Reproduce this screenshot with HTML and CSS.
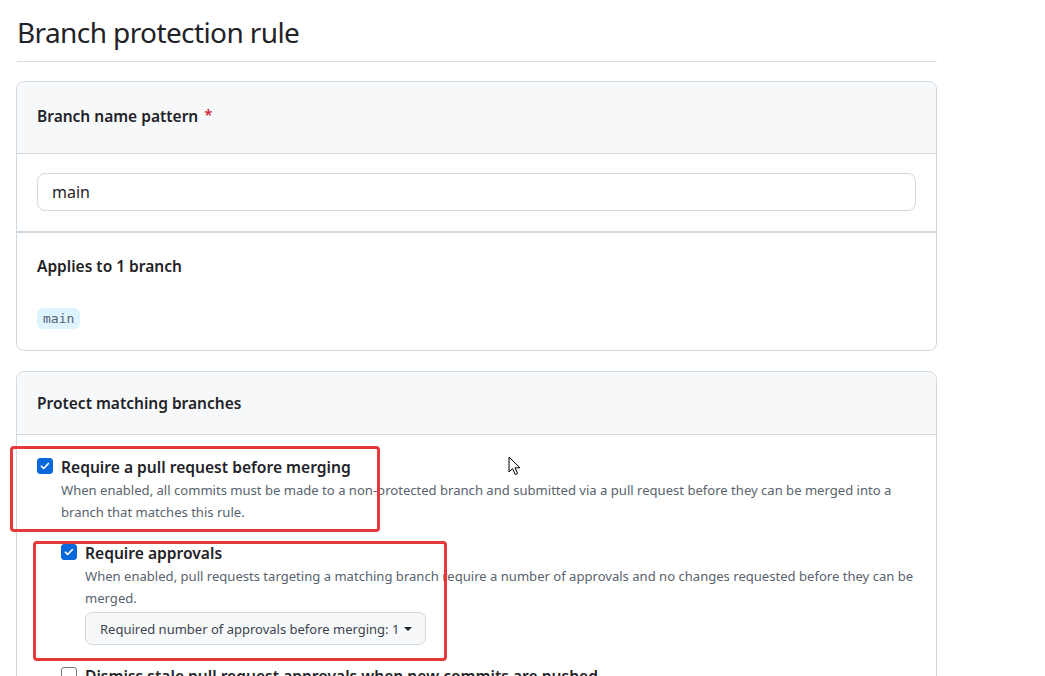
FILE: index.html
```html
<!DOCTYPE html>
<html lang="en">
<head>
<meta charset="utf-8">
<title>Branch protection rule</title>
<link rel="stylesheet" href="styles.css">
</head>
<body>
<div class="page">
  <h1 class="title">Branch protection rule</h1>

  <section class="box">
    <div class="box-header first">
      <span class="label">Branch name pattern</span><span class="req">*</span>
    </div>
    <div class="box-row input-row">
      <div class="text-input">main</div>
    </div>
    <div class="box-row applies">
      <div class="label">Applies to 1 branch</div>
      <div class="chips"><code class="chip">main</code></div>
    </div>
  </section>

  <section class="box box2">
    <div class="box-header">
      <span class="label">Protect matching branches</span>
    </div>
    <div class="box-body">
      <div class="option">
        <span class="cb checked"><svg viewBox="0 0 16 16" width="12" height="12"><path d="M3.2 8.3l3 3 6.4-6.6" fill="none" stroke="#fff" stroke-width="2.2" stroke-linecap="round" stroke-linejoin="round"/></svg></span>
        <div class="opt-text">
          <div class="opt-title">Require a pull request before merging</div>
          <div class="opt-desc">When enabled, all commits must be made to a non-protected branch and submitted via a pull request before they can be merged into a branch that matches this rule.</div>
        </div>
      </div>
      <div class="option nested">
        <span class="cb checked"><svg viewBox="0 0 16 16" width="12" height="12"><path d="M3.2 8.3l3 3 6.4-6.6" fill="none" stroke="#fff" stroke-width="2.2" stroke-linecap="round" stroke-linejoin="round"/></svg></span>
        <div class="opt-text">
          <div class="opt-title">Require approvals</div>
          <div class="opt-desc">When enabled, pull requests targeting a matching branch require a number of approvals and no changes requested before they can be merged.</div>
          <button class="select-btn">Required number of approvals before merging: 1 <span class="caret"></span></button>
        </div>
      </div>
      <div class="option nested next">
        <span class="cb"></span>
        <div class="opt-text">
          <div class="opt-title">Dismiss stale pull request approvals when new commits are pushed</div>
        </div>
      </div>
    </div>
  </section>
</div>

<div class="annot annot1"></div>
<div class="annot annot2"></div>
<svg class="cursor" width="14" height="21" viewBox="0 0 14 21"><path d="M1 1 L1 16 L4.6 12.6 L7.2 18.6 L9.6 17.6 L7 11.8 L12 11.8 Z" fill="#fff" stroke="#000" stroke-width="1" stroke-linejoin="miter"/></svg>
</body>
</html>
```

FILE: styles.css
```css
* { box-sizing: border-box; }
html, body { margin: 0; padding: 0; background: #fff; }
body {
  font-family: "Noto Sans", "Open Sans", sans-serif;
  color: #1f2328;
  overflow: hidden;
  height: 676px;
}
.page {
  width: 921px;
  margin-left: 16px;
  padding-top: 11px;
}
.title {
  font-weight: 400;
  font-size: 28px;
  line-height: 42px;
  margin: 0 0 0 1px;
  padding-bottom: 8px;
  border-bottom: 1px solid #d8dee4;
  letter-spacing: -0.6px;
}
.box {
  margin-top: 19px;
  border: 1px solid #d1d9e0;
  border-radius: 8px;
  overflow: hidden;
}
.box2 { margin-top: 20px; }
.box-header {
  background: #f6f8fa;
  border-bottom: 1px solid #d1d9e0;
  height: 72px;
  padding: 0 20px;
  display: flex;
  align-items: center;
}
.box-header.first { padding-bottom: 4px; }
.box2 .box-header { height: 63px; }
.label {
  font-weight: 600;
  font-size: 15.5px;
}
.req {
  color: #d1242f;
  font-weight: 600;
  font-size: 15px;
  margin-left: 6px;
  position: relative;
  top: -2px;
}
.box-row { padding: 0 20px; }
.input-row {
  padding-top: 19px;
  padding-bottom: 20px;
  border-bottom: 2px solid #d1d9e0;
}
.text-input {
  height: 38px;
  border: 1px solid #d1d9e0;
  border-radius: 8px;
  padding: 0 14px;
  display: flex;
  align-items: center;
  font-size: 16px;
}
.applies {
  padding-top: 22px;
  padding-bottom: 21px;
}
.chips { margin-top: 31px; display: flex; }
.chip {
  display: inline-block;
  font-family: "DejaVu Sans Mono", "Liberation Mono", monospace;
  font-size: 13px;
  color: #59636e;
  background: #ddf4ff;
  border-radius: 6px;
  padding: 0 6px;
  height: 21px;
  line-height: 21px;
}
.box-body {
  padding: 22px 20px 20px;
}
.option {
  display: flex;
  align-items: flex-start;
}
.cb {
  flex: none;
  width: 16px;
  height: 16px;
  border-radius: 3px;
  border: 1px solid #6e7781;
  margin-top: 1px;
  margin-right: 8px;
  display: flex;
  align-items: center;
  justify-content: center;
}
.cb.checked {
  background: #0969da;
  border-color: #0969da;
}
.opt-title {
  font-weight: 600;
  font-size: 15.6px;
  line-height: 20px;
}
.opt-desc {
  font-size: 13.07px;
  line-height: 22px;
  color: #59636e;
  margin-top: 2px;
}
.nested { margin-left: 24px; margin-top: 20px; }
.nested.next { margin-top: 21px; }
.select-btn {
  margin-top: 3px;
  font-family: inherit;
  font-size: 13px;
  color: #3d444d;
  background: #f6f8fa;
  border: 1px solid #d1d9e0;
  border-radius: 7px;
  height: 33px;
  padding: 0 13px 0 14px;
  display: inline-flex;
  align-items: center;
  gap: 3px;
}
.caret {
  display: inline-block;
  width: 0; height: 0;
  border-left: 4px solid transparent;
  border-right: 4px solid transparent;
  border-top: 4px solid #1f2328;
  margin-left: 2px;
}
.annot {
  position: absolute;
  border: 3px solid #e5383b;
  border-radius: 4px;
}
.annot1 { left: 10px; top: 446px; width: 370px; height: 86px; }
.annot2 { left: 33px; top: 541px; width: 414px; height: 120px; }
.cursor { position: absolute; left: 508px; top: 456px; }
```
